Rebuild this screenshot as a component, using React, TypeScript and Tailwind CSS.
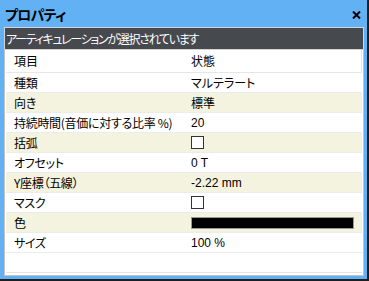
import React from "react";

type Row = {
  label: string;
  kind: "text" | "check" | "color";
  value?: string;
};

const rows: Row[] = [
  { label: "種類", kind: "text", value: "マルテラート" },
  { label: "向き", kind: "text", value: "標準" },
  { label: "持続時間(音価に対する比率 %)", kind: "text", value: "20" },
  { label: "括弧", kind: "check" },
  { label: "オフセット", kind: "text", value: "0 T" },
  { label: "Y座標（五線）", kind: "text", value: "-2.22 mm" },
  { label: "マスク", kind: "check" },
  { label: "色", kind: "color" },
  { label: "サイズ", kind: "text", value: "100 %" },
];

const jp = "font-['Noto_Sans_CJK_JP','Noto_Sans',sans-serif] [font-feature-settings:'palt']";

const Cell: React.FC<{ row: Row }> = ({ row }) => {
  if (row.kind === "check") {
    return <div className="w-[13px] h-[13px] border border-[#333] bg-white" />;
  }
  if (row.kind === "color") {
    return <div className="w-[163px] h-[12px] border border-[#999] bg-black" />;
  }
  return <span>{row.value}</span>;
};

const App: React.FC = () => {
  return (
    <div className={`w-[369px] h-[281px] bg-[#62b1f5] border-r-2 border-b-2 border-[#1e1e1e] flex flex-col ${jp}`}>
      <div className="h-[27px] flex items-center justify-between pl-[5px] pr-[6px] shrink-0">
        <span className="text-[14px] font-bold text-black leading-none tracking-[-0.8px]">プロパティ</span>
        <svg width="9" height="8" viewBox="0 0 9 8" className="mt-[3px]">
          <path d="M1 0.5 L8 7.5 M8 0.5 L1 7.5" stroke="#000" strokeWidth="2" />
        </svg>
      </div>

      <div className="flex-1 flex flex-col pl-[4px] pr-[3px] pb-[3px]">
        <div className="h-[23px] shrink-0 border border-[#d4d4d4] bg-[#464a4f] text-white text-[12px] flex items-center pl-[1px] leading-none tracking-[-1.3px]">
          アーティキュレーションが選択されています
        </div>

        <div className="flex-1 border border-t-0 border-[#c3c3c3] bg-white p-[1px] pt-0 text-[12px] text-black leading-none">
          <div className="h-[23px] flex items-center border-b border-r border-[#e6e6e6]">
            <div className="w-[180px] pl-[8px]">項目</div>
            <div className="pl-[5px]">状態</div>
          </div>
          {rows.map((row, i) => (
            <div
              key={row.label}
              className={`h-[20px] flex items-center border-b border-[#ececec] ${i % 2 === 1 ? "bg-[#f3f3df]" : "bg-white"}`}
            >
              <div className="w-[180px] pl-[8px] whitespace-nowrap tracking-[-0.3px]">{row.label}</div>
              <div className="pl-[5px] font-['Liberation_Sans','Noto_Sans_CJK_JP',sans-serif] flex items-center">
                {row.kind === "text" && /[ぁ-んァ-ン一-龯]/.test(row.value || "") ? (
                  <span className={jp}>{row.value}</span>
                ) : (
                  <Cell row={row} />
                )}
              </div>
            </div>
          ))}
          <div className="h-[20px] border-b border-[#e4e4e4]" />
        </div>
      </div>
    </div>
  );
};

export default App;
